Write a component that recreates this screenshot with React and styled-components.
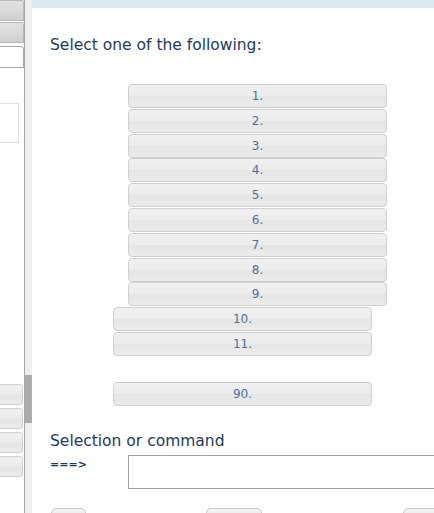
import React from 'react'
import styled, { createGlobalStyle } from 'styled-components'

const GlobalStyle = createGlobalStyle`
  html, body {
    margin: 0;
    padding: 0;
    background: #fff;
    overflow: hidden;
  }
  body {
    font-family: 'DejaVu Sans', Verdana, sans-serif;
  }
`

const items = ['1.', '2.', '3.', '4.', '5.', '6.', '7.', '8.', '9.', '10.', '11.', null, '90.']

const actions = [
  { label: 'Exit', width: 35, offset: 0 },
  { label: 'Cancel', width: 56, offset: 120 },
  { label: 'Switch', width: 60, offset: 141 },
]

function App() {
  return (
    <Page>
      <GlobalStyle />
      <SidePanel>
        <SideTab />
        <SideTab />
        <SideCard />
        <SideBox />
        <SideFill />
        <SideButtons>
          <SideButton />
          <SideButton />
          <SideButton />
          <SideButton />
        </SideButtons>
      </SidePanel>
      <ScrollTrack>
        <ScrollThumb />
      </ScrollTrack>
      <Main>
        <TopBar />
        <Content>
          <Heading>Select one of the following:</Heading>
          <OptionList>
            {items.map((item, i) =>
              item ? (
                <OptionButton key={i} $shift={item.length > 2}>
                  {item}
                </OptionButton>
              ) : (
                <OptionGap key={i} />
              )
            )}
          </OptionList>
          <Heading as="h2" $small>Selection or command</Heading>
          <CommandRow>
            <Prompt>===&gt;</Prompt>
            <CommandInput autoFocus />
          </CommandRow>
          <ActionRow>
            {actions.map(a => (
              <ActionButton key={a.label} $width={a.width} $offset={a.offset}>
                {a.label}
              </ActionButton>
            ))}
          </ActionRow>
        </Content>
      </Main>
    </Page>
  )
}

const Page = styled.div`
  display: flex;
  width: 434px;
  height: 513px;
  overflow: clip;
`

const SidePanel = styled.div`
  width: 25px;
  flex-shrink: 0;
  display: flex;
  flex-direction: column;
  border-right: 1px solid #a8a8a8;
  box-sizing: border-box;
`

const SideTab = styled.div`
  height: 21px;
  flex-shrink: 0;
  margin-bottom: 1px;
  box-sizing: border-box;
  background: linear-gradient(#e2e2e2, #d0d0d0);
  border: 1px solid #b8b8b8;
  border-left: none;
  border-radius: 0 2px 0 0;
`

const SideCard = styled.div`
  height: 22px;
  flex-shrink: 0;
  margin-top: 2px;
  box-sizing: border-box;
  background: #fff;
  border: 1px solid #a8a8a8;
  border-left: none;
  border-radius: 0 4px 0 0;
`

const SideBox = styled.div`
  width: 19px;
  height: 40px;
  flex-shrink: 0;
  margin-top: 35px;
  border: 1px solid #e0e0e0;
  border-left: none;
  box-sizing: border-box;
`

const SideFill = styled.div`
  flex: 1;
`

const SideButtons = styled.div`
  display: flex;
  flex-direction: column;
  gap: 3px;
  margin-bottom: 36px;
`

const SideButton = styled.div`
  height: 21px;
  margin-right: 1px;
  background: linear-gradient(#f0f0f0, #ebebeb 50%, #e4e4e4 52%, #ececec);
  border: 1px solid #d0d0d0;
  border-left: none;
  border-radius: 0 4px 4px 0;
  box-sizing: border-box;
`

const ScrollTrack = styled.div`
  width: 7px;
  flex-shrink: 0;
  background: #eeeeee;
`

const ScrollThumb = styled.div`
  height: 48px;
  margin-top: 375px;
  background: #acacac;
`

const Main = styled.div`
  flex: 1;
  display: flex;
  flex-direction: column;
  min-width: 0;
  overflow: clip;
`

const TopBar = styled.div`
  height: 8px;
  flex-shrink: 0;
  background: #daebf1;
`

const Content = styled.div`
  flex-shrink: 0;
  padding-left: 18px;
  display: flex;
  flex-direction: column;
`

const Heading = styled.h1`
  margin: ${p => (p.$small ? '25px 0 0' : '27px 0 0')};
  font-family: 'DejaVu Sans', sans-serif;
  font-size: 15.5px;
  line-height: 20px;
  font-weight: normal;
  color: #1b3a63;
`

const OptionList = styled.div`
  display: flex;
  flex-direction: column;
  gap: 0.8px;
  margin-top: 29px;
`

const OptionButton = styled.div`
  width: 259px;
  height: 24px;
  flex-shrink: 0;
  margin-left: ${p => (p.$shift ? '63px' : '78px')};
  box-sizing: border-box;
  border: 1px solid #cfcfcf;
  border-radius: 4px;
  background: linear-gradient(#f0f0f0, #ececec 48%, #e5e5e5 52%, #ebebeb);
  display: flex;
  align-items: center;
  justify-content: center;
  font-family: 'DejaVu Sans', sans-serif;
  font-size: 12px;
  color: #4870a8;
`

const OptionGap = styled.div`
  height: 24px;
  flex-shrink: 0;
`

const CommandRow = styled.div`
  display: flex;
  align-items: flex-start;
  margin-top: 4px;
`

const Prompt = styled.div`
  width: 78px;
  flex-shrink: 0;
  padding-top: 3px;
  font-family: 'DejaVu Sans', sans-serif;
  font-size: 11px;
  font-weight: bold;
  color: #1b3a63;
`

const CommandInput = styled.input`
  width: 330px;
  height: 34px;
  flex-shrink: 0;
  box-sizing: border-box;
  border: 1px solid #a0a0a0;
  padding: 2px 2px;
  font-family: 'DejaVu Sans', sans-serif;
  font-size: 12px;
  outline: none;
  caret-color: #000;
`

const ActionRow = styled.div`
  display: flex;
  margin-top: 19px;
  margin-left: 1px;
`

const ActionButton = styled.button`
  width: ${p => p.$width}px;
  height: 20px;
  flex-shrink: 0;
  margin-left: ${p => p.$offset}px;
  padding: 0;
  border: 1px solid #c8c8c8;
  border-radius: 5px;
  background: linear-gradient(#f2f2f2, #e4e4e4);
  font-family: 'DejaVu Sans', sans-serif;
  font-size: 11px;
  color: #4870a8;
`

export default App
